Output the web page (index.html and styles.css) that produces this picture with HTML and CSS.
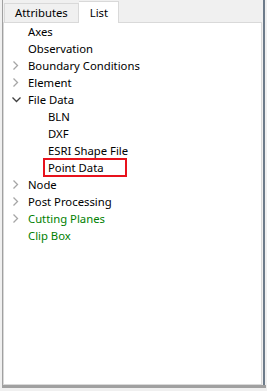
FILE: index.html
```html
<!DOCTYPE html>
<html lang="en">
<head>
  <meta charset="UTF-8">
  <title>List</title>
  <link rel="stylesheet" href="styles.css">
</head>
<body>
<div class="frame">
  <div class="tabs">
    <div class="tab">Attributes</div>
    <div class="tab active">List</div>
  </div>
  <div class="panel">
    <ul class="tree">
      <li class="row"><span class="arrow"></span>Axes</li>
      <li class="row"><span class="arrow"></span>Observation</li>
      <li class="row"><span class="arrow"><svg width="7" height="9" viewBox="0 0 7 9"><path d="M1.5 0.5 L5.5 4.5 L1.5 8.5" fill="none" stroke="#a6a6a6" stroke-width="1.3"/></svg></span>Boundary Conditions</li>
      <li class="row"><span class="arrow"><svg width="7" height="9" viewBox="0 0 7 9"><path d="M1.5 0.5 L5.5 4.5 L1.5 8.5" fill="none" stroke="#a6a6a6" stroke-width="1.3"/></svg></span>Element</li>
      <li class="row"><span class="arrow"><svg width="9" height="7" viewBox="0 0 9 7"><path d="M0.5 1.5 L4.5 5.5 L8.5 1.5" fill="none" stroke="#404040" stroke-width="1.3"/></svg></span>File Data</li>
      <li class="row sub">BLN</li>
      <li class="row sub">DXF</li>
      <li class="row sub">ESRI Shape File</li>
      <li class="row sub"><span class="picked">Point Data</span></li>
      <li class="row"><span class="arrow"><svg width="7" height="9" viewBox="0 0 7 9"><path d="M1.5 0.5 L5.5 4.5 L1.5 8.5" fill="none" stroke="#a6a6a6" stroke-width="1.3"/></svg></span>Node</li>
      <li class="row"><span class="arrow"><svg width="7" height="9" viewBox="0 0 7 9"><path d="M1.5 0.5 L5.5 4.5 L1.5 8.5" fill="none" stroke="#a6a6a6" stroke-width="1.3"/></svg></span>Post Processing</li>
      <li class="row green"><span class="arrow"><svg width="7" height="9" viewBox="0 0 7 9"><path d="M1.5 0.5 L5.5 4.5 L1.5 8.5" fill="none" stroke="#a6a6a6" stroke-width="1.3"/></svg></span>Cutting Planes</li>
      <li class="row green"><span class="arrow"></span>Clip Box</li>
    </ul>
  </div>
</div>
<div class="bottom-bar"></div>
</body>
</html>
```

FILE: styles.css
```css
html, body {
  margin: 0;
  padding: 0;
  background: #f0f0f0;
  font-family: 'Noto Sans', sans-serif;
  font-size: 11.3px;
  color: #000;
  overflow: hidden;
}
.frame {
  margin-left: 2px;
  width: 263px;
  height: 385px;
  border-left: 1px solid #a0a0a0;
  border-right: 2px solid #6d7b8a;
  box-sizing: border-box;
  display: flex;
  flex-direction: column;
  padding: 0 1px 0 0;
}
.tabs {
  display: flex;
  align-items: flex-end;
  height: 22px;
  padding-left: 1px;
}
.tab {
  height: 18px;
  line-height: 18px;
  padding: 0 10px 0 10px;
  border: 1px solid #d9d9d9;
  border-bottom: none;
  background: #f0f0f0;
}
.tab.active {
  height: 21px;
  line-height: 22px;
  padding: 0 10px 0 11px;
  background: #fff;
  border-left: none;
  margin-bottom: -1px;
  position: relative;
  z-index: 1;
}
.panel {
  flex: 1;
  background: #fff;
  border: 1px solid #d9d9d9;
}
.tree {
  list-style: none;
  margin: 0;
  padding: 0;
}
.row {
  height: 17px;
  line-height: 17px;
  display: flex;
  align-items: center;
  padding-left: 6px;
  white-space: nowrap;
}
.arrow {
  width: 18px;
  display: flex;
  align-items: center;
  padding-left: 2px;
  box-sizing: border-box;
}
.row.sub {
  padding-left: 44px;
}
.green {
  color: #008000;
}
.picked {
  border: 2px solid #e8121c;
  padding: 0 21px 0 3px;
  margin-left: -5px;
  height: 15px;
  line-height: 15px;
}
.bottom-bar {
  margin: 0 1px 0 2px;
  height: 3px;
  background: #a0a0a0;
}
```
